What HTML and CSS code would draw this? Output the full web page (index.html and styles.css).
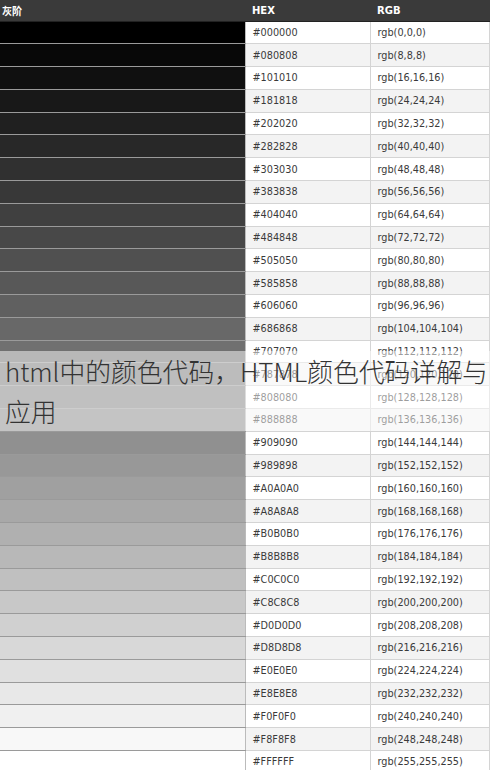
FILE: index.html
```html
<!DOCTYPE html>
<html>
<head>
    <meta charset="UTF-8">
    <title>html中的颜色代码</title>
    <link rel="stylesheet" href="styles.css">
</head>
<body>
<table class="gray-table">
    <thead>
        <tr>
            <th class="col-swatch">灰阶</th>
            <th class="col-hex">HEX</th>
            <th class="col-rgb">RGB</th>
        </tr>
    </thead>
    <tbody>
        <tr><td class="swatch" style="background:#000000"></td><td>#000000</td><td>rgb(0,0,0)</td></tr>
        <tr><td class="swatch" style="background:#080808"></td><td>#080808</td><td>rgb(8,8,8)</td></tr>
        <tr><td class="swatch" style="background:#101010"></td><td>#101010</td><td>rgb(16,16,16)</td></tr>
        <tr><td class="swatch" style="background:#181818"></td><td>#181818</td><td>rgb(24,24,24)</td></tr>
        <tr><td class="swatch" style="background:#202020"></td><td>#202020</td><td>rgb(32,32,32)</td></tr>
        <tr><td class="swatch" style="background:#282828"></td><td>#282828</td><td>rgb(40,40,40)</td></tr>
        <tr><td class="swatch" style="background:#303030"></td><td>#303030</td><td>rgb(48,48,48)</td></tr>
        <tr><td class="swatch" style="background:#383838"></td><td>#383838</td><td>rgb(56,56,56)</td></tr>
        <tr><td class="swatch" style="background:#404040"></td><td>#404040</td><td>rgb(64,64,64)</td></tr>
        <tr><td class="swatch" style="background:#484848"></td><td>#484848</td><td>rgb(72,72,72)</td></tr>
        <tr><td class="swatch" style="background:#505050"></td><td>#505050</td><td>rgb(80,80,80)</td></tr>
        <tr><td class="swatch" style="background:#585858"></td><td>#585858</td><td>rgb(88,88,88)</td></tr>
        <tr><td class="swatch" style="background:#606060"></td><td>#606060</td><td>rgb(96,96,96)</td></tr>
        <tr><td class="swatch" style="background:#686868"></td><td>#686868</td><td>rgb(104,104,104)</td></tr>
        <tr><td class="swatch" style="background:#707070"></td><td>#707070</td><td>rgb(112,112,112)</td></tr>
        <tr><td class="swatch" style="background:#787878"></td><td>#787878</td><td>rgb(120,120,120)</td></tr>
        <tr><td class="swatch" style="background:#808080"></td><td>#808080</td><td>rgb(128,128,128)</td></tr>
        <tr><td class="swatch" style="background:#888888"></td><td>#888888</td><td>rgb(136,136,136)</td></tr>
        <tr><td class="swatch" style="background:#909090"></td><td>#909090</td><td>rgb(144,144,144)</td></tr>
        <tr><td class="swatch" style="background:#989898"></td><td>#989898</td><td>rgb(152,152,152)</td></tr>
        <tr><td class="swatch" style="background:#A0A0A0"></td><td>#A0A0A0</td><td>rgb(160,160,160)</td></tr>
        <tr><td class="swatch" style="background:#A8A8A8"></td><td>#A8A8A8</td><td>rgb(168,168,168)</td></tr>
        <tr><td class="swatch" style="background:#B0B0B0"></td><td>#B0B0B0</td><td>rgb(176,176,176)</td></tr>
        <tr><td class="swatch" style="background:#B8B8B8"></td><td>#B8B8B8</td><td>rgb(184,184,184)</td></tr>
        <tr><td class="swatch" style="background:#C0C0C0"></td><td>#C0C0C0</td><td>rgb(192,192,192)</td></tr>
        <tr><td class="swatch" style="background:#C8C8C8"></td><td>#C8C8C8</td><td>rgb(200,200,200)</td></tr>
        <tr><td class="swatch" style="background:#D0D0D0"></td><td>#D0D0D0</td><td>rgb(208,208,208)</td></tr>
        <tr><td class="swatch" style="background:#D8D8D8"></td><td>#D8D8D8</td><td>rgb(216,216,216)</td></tr>
        <tr><td class="swatch" style="background:#E0E0E0"></td><td>#E0E0E0</td><td>rgb(224,224,224)</td></tr>
        <tr><td class="swatch" style="background:#E8E8E8"></td><td>#E8E8E8</td><td>rgb(232,232,232)</td></tr>
        <tr><td class="swatch" style="background:#F0F0F0"></td><td>#F0F0F0</td><td>rgb(240,240,240)</td></tr>
        <tr><td class="swatch" style="background:#F8F8F8"></td><td>#F8F8F8</td><td>rgb(248,248,248)</td></tr>
        <tr><td class="swatch" style="background:#FFFFFF"></td><td>#FFFFFF</td><td>rgb(255,255,255)</td></tr>
    </tbody>
</table>

<div class="title-band">html中的颜色代码，HTML颜色代码详解与应用</div>
</body>
</html>
```

FILE: styles.css
```css
body {
    margin: 0;
    font-family: "DejaVu Sans", Verdana, sans-serif;
    background: #fff;
    overflow: hidden;
}
.gray-table {
    width: 490px;
    border-collapse: collapse;
    table-layout: fixed;
}
.gray-table th,
.gray-table td {
    box-sizing: border-box;
}
.gray-table th {
    height: 21px;
    padding: 0 0 0 7px;
    background: #3a3a3a;
    color: #fff;
    font-size: 10px;
    font-weight: bold;
    text-align: left;
    border-bottom: 1px solid #222;
}
.gray-table .col-swatch {
    width: 245px;
    padding-left: 2px;
    font-family: "Noto Sans CJK SC", sans-serif;
    font-size: 10px;
}
.gray-table .col-hex {
    width: 125px;
}
.gray-table td {
    height: 22.8px;
    padding: 0 0 0 7px;
    font-size: 9.7px;
    color: #3a3a3a;
    border-bottom: 1px solid #d4d4d4;
    border-right: 1px solid #d4d4d4;
}
.gray-table tbody tr:nth-child(even) td {
    background: #f3f3f3;
}
.gray-table td.swatch {
    border-bottom-color: #9a9a9a;
    border-right-color: #bbb;
}
.title-band {
    position: absolute;
    top: 351px;
    left: 0;
    right: 0;
    padding: 0 0 0 5px;
    background: rgba(255, 255, 255, 0.5);
    color: #333;
    font-family: "Noto Sans CJK SC", sans-serif;
    font-weight: 300;
    font-size: 25.8px;
    line-height: 40px;
}
```
